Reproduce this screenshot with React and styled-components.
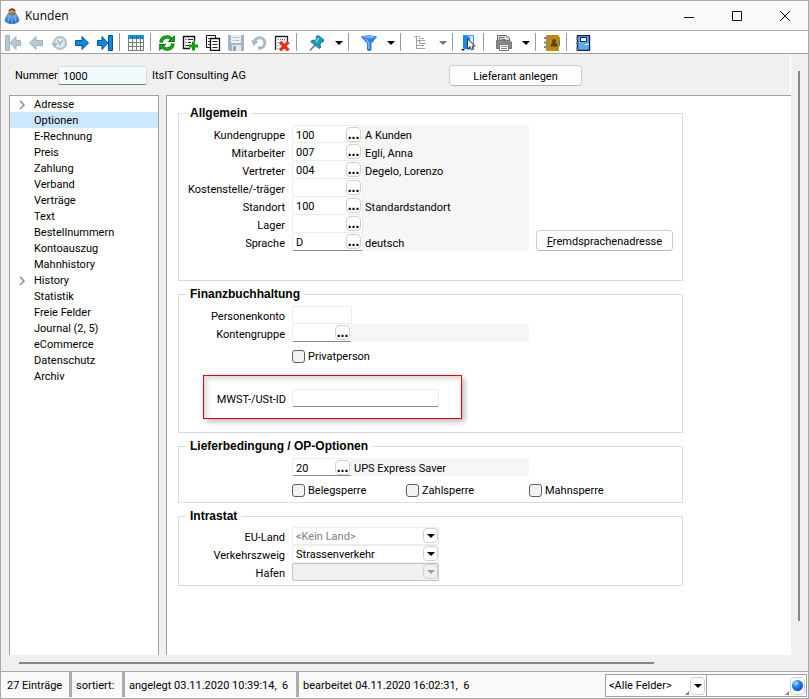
import React from "react";
import styled, { createGlobalStyle } from "styled-components";

const GlobalStyle = createGlobalStyle`
  *, *::before, *::after {
    box-sizing: border-box;
  }
  body {
    margin: 0;
    background: #f0f0f0;
    color: #000;
    font-family: Roboto, "Liberation Sans", sans-serif;
    font-size: 11px;
    line-height: 16px;
  }
  button, input, select {
    font: inherit;
    color: inherit;
    margin: 0;
    padding: 0;
  }
`;

/* ---------- icons ---------- */

const Svg = ({ children, size = 16, ...rest }) => (
  <svg
    width={size}
    height={size}
    viewBox="0 0 16 16"
    aria-hidden="true"
    {...rest}
  >
    {children}
  </svg>
);

const PersonIcon = () => (
  <Svg>
    <defs>
      <linearGradient id="coat" x1="0" y1="0" x2="0" y2="1">
        <stop offset="0" stopColor="#7fb9f0" />
        <stop offset="1" stopColor="#1766c4" />
      </linearGradient>
      <radialGradient id="head" cx="0.4" cy="0.3" r="0.8">
        <stop offset="0" stopColor="#d9bd85" />
        <stop offset="1" stopColor="#7d5316" />
      </radialGradient>
    </defs>
    <path
      d="M5 5C3 7 1.500 9 1 13C3 15 5 15.500 8 15.500s5-.5 7-2.500C14.500 9 13 7 11 5z"
      fill="url(#coat)"
      stroke="#1d5ca8"
      strokeWidth="0.6"
    />
    <path d="M5.500 8L4 14M8 9v6M10.500 8L12 14" stroke="#8ec6fa" strokeWidth="0.8" />
    <circle cx="8" cy="3.800" r="3.500" fill="url(#head)" />
    <path d="M4.500 3Q5 .4 8 .4t3.500 2.600Q8 1.500 4.500 3z" fill="#6d4a14" />
  </Svg>
);

const FirstIcon = () => (
  <Svg>
    <g fill="#b4c8d6" stroke="#9fb5c5">
      <path d="M.5.5h4v15h-4z" />
      <path d="M5 8l6-6.500v4h4.500v5H11v4z" />
    </g>
  </Svg>
);

const PrevIcon = () => (
  <Svg>
    <path
      d="M1.500 8L8 1.500v4h6.500v5H8v4z"
      fill="#b4c8d6"
      stroke="#9fb5c5"
    />
  </Svg>
);

const HistoryIcon = () => (
  <Svg>
    <circle cx="9" cy="8" r="6" fill="#e3eaef" stroke="#b5c6d2" strokeWidth="2.400" />
    <path d="M0 8h7L3.500 12.500z" fill="#a9bccb" />
    <path d="M6.500 5.500l2.500 3 3-3M9 8.500v2" fill="none" stroke="#9fb4c3" strokeWidth="1.500" />
  </Svg>
);

const NextIcon = () => (
  <Svg>
    <path d="M14.500 8L8 1.500v4H1.500v5H8v4z" fill="#0b8ae0" stroke="#0b4ea8" />
  </Svg>
);

const LastIcon = () => (
  <Svg>
    <g fill="#0b8ae0" stroke="#0b4ea8">
      <path d="M11.500.5h4v15h-4z" />
      <path d="M11 8L5 1.500v4H.5v5H5v4z" />
    </g>
  </Svg>
);

const TableIcon = () => (
  <Svg>
    <path d="M0 0h16v16H0z" fill="#7c7c7c" />
    <path d="M0 0h16v4H0z" fill="#1494cf" />
    <path d="M4.500 1v2M8.500 1v2M12.500 1v2" stroke="#0a5c8c" />
    <g fill="#fff">
      <path d="M1 4h3v3H1zM5 4h3v3H5zM9 4h3v3H9zM13 4h2v3h-2z" />
      <path d="M1 8h3v3H1zM5 8h3v3H5zM9 8h3v3H9zM13 8h2v3h-2z" />
      <path d="M1 12h3v3H1zM5 12h3v3H5zM9 12h3v3H9zM13 12h2v3h-2z" />
    </g>
  </Svg>
);

const RefreshIcon = () => (
  <Svg>
    <g fill="none" stroke="#067006" strokeWidth="3.400">
      <path d="M2 7.500A6 6 0 0 1 12 3.500" />
      <path d="M14 8.500A6 6 0 0 1 4 12.500" />
    </g>
    <path d="M15.800 0v7H8.500z" fill="#067006" />
    <path d="M.2 16V9h7.300z" fill="#067006" />
    <g fill="none" stroke="#14b014" strokeWidth="1.800">
      <path d="M2 7.500A6 6 0 0 1 12 3.500" />
      <path d="M14 8.500A6 6 0 0 1 4 12.500" />
    </g>
    <path d="M14.800 2.400v3.600h-3.800zM1.200 13.600V10H5z" fill="#14b014" />
  </Svg>
);

const AddIcon = () => (
  <Svg>
    <path d="M8 13.500H1.500v-12h11V6" fill="#fff" stroke="#111" strokeWidth="1.400" />
    <path d="M3.500 4.500h1M6 4.500h5M3.500 7.500h1M6 7.500h3M3.500 10.500h4" stroke="#222" />
    <path d="M11.500 6.500v9M7 11h9" stroke="#0aa00a" strokeWidth="3" />
  </Svg>
);

const CopyIcon = () => (
  <Svg>
    <path d="M1.500.5h9v12h-9z" fill="#fff" stroke="#111" />
    <path d="M3 3.500h6M3 6.500h3M3 9.500h3" stroke="#333" />
    <path d="M5.500 3.500h9v12h-9z" fill="#fff" stroke="#111" strokeWidth="1.300" />
    <path d="M7.500 6.500h5M7.500 9.500h5M7.500 12.500h5" stroke="#222" />
  </Svg>
);

const SaveIcon = () => (
  <Svg>
    <path d="M0 0h16v16H1.500L0 14.500z" fill="#a3b6c6" />
    <path d="M3 0h10v8H3z" fill="#eef2f5" />
    <path d="M4.500 2.500h7M4.500 5.500h7" stroke="#b9c7d2" />
    <path d="M4 10h9v6H4z" fill="#e2e9ee" />
    <path d="M5 11h3v5H5z" fill="#93a8ba" />
  </Svg>
);

const UndoIcon = () => (
  <Svg>
    <path
      d="M3.500 7A5.200 5.200 0 1 1 9 13.200"
      fill="none"
      stroke="#a9bac8"
      strokeWidth="3"
    />
    <path d="M0 5l7.500 1.500L2.500 11z" fill="#a9bac8" />
    <path d="M6.500 11.500h4L8 16z" fill="#a9bac8" />
  </Svg>
);

const DeleteIcon = () => (
  <Svg>
    <path d="M1.500 15V1.500h12V8" fill="none" stroke="#222" strokeWidth="1.300" />
    <path
      d="M3.500 4.500h1M6 4.500h5M3.500 7.500h1M3.500 10.500h1M3.500 13.500h2"
      stroke="#666"
      strokeDasharray="1 1"
    />
    <path d="M6 7l8.500 8.500M14.500 7L6 15.500" stroke="#f03210" strokeWidth="3.200" />
  </Svg>
);

const PinIcon = () => (
  <Svg>
    <path d="M6 10L1 15.500" stroke="#777" strokeWidth="1.600" />
    <path
      d="M7 1.500L9.500.6l5.500 4.400-1 2-1.500.2-1.500 2.300.8 3-1.500 1L1.800 6.800 3 5.200l3 .3L7.500 3.500z"
      fill="#1c9bc4"
      stroke="#115f80"
      strokeWidth="0.8"
    />
    <path d="M9.500 3l-2.500 4" stroke="#79d3ee" strokeWidth="1.500" />
  </Svg>
);

const FilterIcon = () => (
  <Svg>
    <path
      d="M.5 1.800Q8-.5 15.500 1.800L10 8.500v6.500Q8 16.300 6.500 15V8.500z"
      fill="#2f88e8"
      stroke="#1b5fbd"
      strokeWidth="0.800"
    />
    <ellipse cx="8" cy="2" rx="6" ry="1.200" fill="#6eb4fa" />
    <path d="M4.500 4l3.300 4.300V14" fill="none" stroke="#7fc0ff" strokeWidth="1.200" />
  </Svg>
);

const TreeIcon = () => (
  <Svg>
    <g fill="none" stroke="#a2a2a2">
      <path d="M1 1.500h6M3.500 2v11.500H7M3.500 5.500H7M6.500 5.500v3H9M3.500 10.500H7" />
      <path d="M6 3.500h5M7 5.500h5M9 8.500h4M7 10.500h4M7 13.500h5" />
    </g>
  </Svg>
);

const DoorIcon = () => (
  <Svg>
    <path d="M2.500.5h10v13h-10z" fill="#cfe8fc" stroke="#3c9de6" />
    <path d="M2 0l7 2v13l-7-2z" fill="#1389e8" />
    <path d="M0 14h4l-2 2z" fill="#000" />
    <path
      d="M6.500 4v10l2.500-2.300L10.500 15l1.800-.8L11 11h3.200z"
      fill="#f7f3e4"
      stroke="#2b2b2b"
      strokeWidth="0.900"
    />
  </Svg>
);

const PrinterIcon = () => (
  <Svg>
    <path d="M1.500 5V.5H10L13.500 3v3" fill="#ddd" stroke="#666" />
    <path d="M3.500 5.500v-3h5M5.500 5.500v-1h4" fill="none" stroke="#777" />
    <path d="M.5 5.500h13l2 1.500v6.500H.5z" fill="#8b8b8b" stroke="#777" />
    <path d="M11 7.500h1" stroke="#d22" />
    <path d="M13 7.500h1" stroke="#2b2" />
    <path d="M3.500 9.500h9v6h-9z" fill="#fff" stroke="#777" />
    <path d="M5 11.500h6M5 13.500h6" stroke="#888" />
  </Svg>
);

const AddressBookIcon = () => (
  <Svg>
    <path d="M14 2h2v3h-2z" fill="#f08020" />
    <path d="M14 5h2v3h-2z" fill="#2a2" />
    <path d="M14 8h2v3h-2z" fill="#28d" />
    <rect x="2" y="0" width="13" height="16" rx="1" fill="#bf8a0c" />
    <circle cx="10" cy="6" r="2" fill="#5d3e05" />
    <path d="M6.500 11.500q0-4 3.500-4t3.500 4z" fill="#5d3e05" />
    <path d="M0 3h5M0 7.500h5M0 12h5" stroke="#888" strokeWidth="1.800" />
  </Svg>
);

const NotebookIcon = () => (
  <Svg>
    <path d="M2.500.5h12v15h-12z" fill="#5cadf8" stroke="#06264d" strokeWidth="1.400" />
    <path d="M5.500 2.500h6v4h-6z" fill="#fff" stroke="#06264d" />
    <path d="M10 9.500h4" stroke="#fff" />
    <path d="M1 3.500h3M1 8.500h3M1 13.500h3" stroke="#777" strokeWidth="2" />
  </Svg>
);

const ArrowIcon = ({ color = "#000" }) => (
  <svg width="8" height="4" viewBox="0 0 8 4" aria-hidden="true">
    <path d="M0 0h8L4 4z" fill={color} />
  </svg>
);

const ChevronIcon = () => (
  <svg width="6" height="10" viewBox="0 0 6 10" aria-hidden="true">
    <path d="M1 1l4 4-4 4" fill="none" stroke="#8a8a8a" strokeWidth="1.500" />
  </svg>
);

const BallIcon = () => (
  <svg width="11" height="11" viewBox="0 0 11 11" aria-hidden="true">
    <defs>
      <radialGradient id="ball" cx="0.35" cy="0.3" r="0.8">
        <stop offset="0" stopColor="#bfe2ff" />
        <stop offset="0.4" stopColor="#1b86fa" />
        <stop offset="1" stopColor="#0546b8" />
      </radialGradient>
    </defs>
    <circle cx="5.500" cy="5.500" r="5.500" fill="url(#ball)" />
  </svg>
);

/* ---------- window frame ---------- */

const Window = styled.div`
  display: flex;
  flex-direction: column;
  min-height: 100vh;
  border: 1px solid #a9a9a9;
  background: #f0f0f0;
`;

const TitleBar = styled.header`
  display: flex;
  align-items: center;
  gap: 2px;
  height: 30px;
  padding-left: 3px;
  background: #f9f9f9;
  border-bottom: 1px solid #a9a9a9;

  h1 {
    flex: 1;
    margin: 0 0 0 3px;
    font-family: "Open Sans", "Noto Sans", sans-serif;
    font-size: 12px;
    font-weight: 400;
  }
`;

const WindowButton = styled.button`
  display: grid;
  place-items: center;
  width: 46px;
  height: 28px;
  border: 0;
  background: none;
`;

const Toolbar = styled.div`
  display: flex;
  align-items: center;
  height: 23px;
  background: #fff;
  border-bottom: 1px solid #a0a0a0;
`;

const ToolButton = styled.button`
  display: grid;
  place-items: center;
  flex: none;
  width: ${(props) => (props.$wide ? "32px" : "23px")};
  height: 22px;
  padding-top: 2px;
  border: 0;
  background: none;
`;

const ToolArrow = styled(ToolButton)`
  width: 12px;
`;

const Separator = styled.span`
  flex: none;
  width: 1px;
  height: 18px;
  margin: 0 4px 0 3px;
  background: #9a9a9a;
`;

const Workspace = styled.div`
  display: flex;
  flex: 1;
`;

const Main = styled.div`
  display: flex;
  flex: 1;
  flex-direction: column;
  min-width: 0;
`;

const VerticalScroll = styled.div`
  display: flex;
  flex: none;
  padding: 17px 8px 34px 7px;

  span {
    width: 2px;
    background: #868686;
  }
`;

const HorizontalScroll = styled.div`
  height: 16px;
  padding: 7px 154px 7px 18px;

  span {
    display: block;
    height: 2px;
    background: #868686;
  }
`;

const RecordHeader = styled.div`
  display: flex;
  align-items: center;
  height: 41px;
  padding: 2px 0 0 14px;
  border-right: 1px solid #fff;

  label {
    width: 43px;
  }
  output {
    width: 302px;
    padding-left: 5px;
  }
`;

const NumberInput = styled.input`
  width: 89px;
  height: 19px;
  padding: 1px 0 0 4px;
  border: 1px solid #dcdcdc;
  border-bottom-color: #7a7a7a;
  border-radius: 2px;
  background: #f0faff;
`;

const PushButton = styled.button`
  flex: none;
  width: ${(props) => props.$width};
  height: 21px;
  padding-top: 2px;
  border: 1px solid #cdcdcd;
  border-bottom-color: #b8b8b8;
  border-radius: 4px;
  background: #fdfdfd;
`;

const Panels = styled.div`
  display: flex;
  flex: 1;
  gap: 7px;
  padding-left: 8px;
`;

/* ---------- navigation ---------- */

const Sidebar = styled.nav`
  flex: none;
  width: 150px;
  border: 1px solid #a0a0a0;
  border-bottom: 0;
  background: #fff;
`;

const NavItem = styled.button`
  display: flex;
  align-items: center;
  width: 100%;
  height: 16px;
  padding: 1px 0 0 9px;
  border: 0;
  border-radius: 2px;
  text-align: left;
  background: ${(props) => (props.$selected ? "#cce8ff" : "none")};

  .expander {
    display: flex;
    width: 15px;
  }
`;

/* ---------- form ---------- */

const Form = styled.form`
  display: flex;
  flex: 1;
  flex-direction: column;
  gap: 6px;
  min-width: 0;
  padding: 10px 11px;
  border: solid #a0a0a0;
  border-width: 1px 0 0 1px;
  background: #fff;
`;

const Group = styled.fieldset`
  width: 100%;
  max-width: 505px;
  min-width: 0;
  margin: 0;
  padding: ${(props) => props.$padding || "4px 0"};
  border: 1px solid #dcdcdc;

  legend {
    margin-left: 7px;
    padding: 0 4px;
    font-family: "Liberation Sans", sans-serif;
    font-size: 12px;
    font-weight: 700;
    line-height: 15px;
  }
`;

const GroupBody = styled.div`
  display: flex;
  align-items: flex-end;
  gap: 7px;
`;

const Rows = styled.div`
  flex: 0 1 350px;
  min-width: 0;
`;

const Field = styled.div`
  display: flex;
  align-items: center;
  width: ${(props) => props.$width};
  margin-left: 6px;
  padding-right: 1px;
  border: 1px solid #ececec;
  border-top: 0;
  border-bottom-color: ${(props) => (props.$last ? "#8a8a8a" : "#ececec")};
  border-radius: 2px;
  background: #fff;

  input {
    flex: 1;
    min-width: 0;
    height: 17px;
    padding: 2px 0 0 3px;
    border: 0;
    background: none;
    outline: none;
  }
`;

const Row = styled.div`
  display: grid;
  grid-template-columns: 107px auto minmax(0, 1fr);
  grid-template-rows: 18px;
  align-items: stretch;

  label {
    padding-right: 1px;
    line-height: 21px;
    text-align: right;
  }
  &:first-child ${Field} {
    border-top: 1px solid #ececec;
  }
`;

const LookupButton = styled.button`
  display: flex;
  flex: none;
  justify-content: center;
  width: 15px;
  height: 15px;
  border: 1px solid #cfcfcf;
  border-radius: 4px;
  background: #fff;
  font-family: "Liberation Sans", sans-serif;
  font-size: 14px;
  font-weight: 700;
  line-height: 13px;
`;

const Readout = styled.output`
  padding-left: 2px;
  line-height: 21px;
  background: #f6f6f6;
`;

const CheckLabel = styled.label`
  display: flex;
  align-items: center;
  gap: 3px;
  height: 14px;
  line-height: 14px;

  input {
    flex: none;
    appearance: none;
    width: 13px;
    height: 13px;
    border: 1px solid #5f5f5f;
    border-radius: 3px;
    background: #f3f3f3;
  }
  span {
    padding-top: 1px;
  }
`;

const CheckRow = styled.div`
  display: grid;
  grid-template-columns: 114px 123px auto;
  margin-top: 7px;
  padding-left: 113px;
`;

const Highlight = styled.div`
  width: 259px;
  margin: 12px 0 0 24px;
  padding: 13px 0 11px;
  border: 1px solid #f00000;
  box-shadow: 3px 3px 5px rgba(0, 0, 0, 0.25),
    inset 3px 3px 5px rgba(0, 0, 0, 0.15);

  ${Row} {
    grid-template-columns: 83px auto;
  }
  ${Field} {
    margin-left: 5px;
  }
`;

const Picker = styled.div`
  position: relative;
  width: 147px;
  height: 18px;
  margin-left: 6px;

  select {
    appearance: none;
    width: 100%;
    height: 100%;
    padding: 1px 0 0 3px;
    border: 1px solid ${(props) => (props.$disabled ? "#c4c4c4" : "#ececec")};
    border-radius: 2px;
    background: ${(props) => (props.$disabled ? "#f0f0f0" : "#fff")};
    color: ${(props) => (props.$muted ? "#808080" : "#000")};
    opacity: 1;
  }
`;

const PickerArrow = styled.span`
  position: absolute;
  top: 1px;
  right: 1px;
  display: grid;
  place-items: center;
  width: 15px;
  height: 15px;
  padding-top: 1px;
  border: 1px solid #d0d0d0;
  border-radius: 4px;
  background: ${(props) => (props.$disabled ? "#f0f0f0" : "#fff")};
  pointer-events: none;
`;

/* ---------- status bar ---------- */

const StatusBar = styled.footer`
  display: flex;
  height: 27px;
  padding-right: 1px;
  border-top: 1px solid #a9a9a9;
  background: #f9f9f9;
`;

const StatusCell = styled.span`
  flex: ${(props) => (props.$width ? `0 0 ${props.$width}` : "1")};
  height: 25px;
  padding-left: ${(props) => (props.$first ? "6px" : "4px")};
  border-right: ${(props) => (props.$width ? "3px solid #adadad" : "0")};
  line-height: 27px;
  white-space: pre;
`;

const StatusField = styled.div`
  position: relative;
  display: flex;
  width: 101px;
  height: 23px;
  margin-top: 2px;
  border: 1px solid #a0a0a0;
  border-right-width: ${(props) => (props.$joined ? "0" : "1px")};
  background: #fff;

  select,
  input {
    appearance: none;
    flex: 1;
    min-width: 0;
    padding-left: 3px;
    border: 0;
    background: none;
    outline: none;
  }
  &::after {
    content: "";
    position: absolute;
    right: 17px;
    bottom: 1px;
    border: 2px solid #808080;
    border-top-color: transparent;
    border-left-color: transparent;
  }
`;

const StatusButton = styled.button`
  display: grid;
  place-items: center;
  align-self: center;
  width: 15px;
  height: 18px;
  margin-right: 1px;
  border: 1px solid #d0d0d0;
  border-radius: 4px;
  background: #fff;
`;

/* ---------- data ---------- */

const toolGroups = [
  [
    ["Erster", FirstIcon],
    ["Zurück", PrevIcon],
    ["Verlauf", HistoryIcon],
    ["Weiter", NextIcon],
    ["Letzter", LastIcon],
  ],
  [["Tabelle", TableIcon]],
  [
    ["Aktualisieren", RefreshIcon],
    ["Neu", AddIcon],
    ["Kopieren", CopyIcon],
    ["Speichern", SaveIcon],
    ["Rückgängig", UndoIcon],
    ["Löschen", DeleteIcon],
  ],
  [["Anheften", PinIcon, "#000"]],
  [["Filter", FilterIcon, "#000"]],
  [["Struktur", TreeIcon, "#777"]],
  [["Auswahl", DoorIcon]],
  [["Drucken", PrinterIcon, "#000"]],
  [["Adressbuch", AddressBookIcon]],
  [["Notizbuch", NotebookIcon]],
];

const navItems = [
  { label: "Adresse", expandable: true },
  { label: "Optionen", selected: true },
  { label: "E-Rechnung" },
  { label: "Preis" },
  { label: "Zahlung" },
  { label: "Verband" },
  { label: "Verträge" },
  { label: "Text" },
  { label: "Bestellnummern" },
  { label: "Kontoauszug" },
  { label: "Mahnhistory" },
  { label: "History", expandable: true },
  { label: "Statistik" },
  { label: "Freie Felder" },
  { label: "Journal (2, 5)" },
  { label: "eCommerce" },
  { label: "Datenschutz" },
  { label: "Archiv" },
];

const generalFields = [
  { id: "kundengruppe", label: "Kundengruppe", value: "100", text: "A Kunden" },
  { id: "mitarbeiter", label: "Mitarbeiter", value: "007", text: "Egli, Anna" },
  { id: "vertreter", label: "Vertreter", value: "004", text: "Degelo, Lorenzo" },
  { id: "kostenstelle", label: "Kostenstelle/-träger", value: "", text: "" },
  { id: "standort", label: "Standort", value: "100", text: "Standardstandort" },
  { id: "lager", label: "Lager", value: "", text: "" },
  { id: "sprache", label: "Sprache", value: "D", text: "deutsch" },
];

/* ---------- components ---------- */

const LookupRow = ({ id, label, value, text, width = "71px", last }) => (
  <Row>
    <label htmlFor={id}>{label}</label>
    <Field $width={width} $last={last}>
      <input
        id={id}
        defaultValue={value}
        aria-label={label ? undefined : "Lieferbedingung"}
      />
      <LookupButton type="button">...</LookupButton>
    </Field>
    <Readout htmlFor={id}>{text}</Readout>
  </Row>
);

const SelectRow = ({ id, label, value, muted, disabled }) => (
  <Row>
    <label htmlFor={id}>{label}</label>
    <Picker $muted={muted} $disabled={disabled}>
      <select id={id} disabled={disabled}>
        <option>{value}</option>
      </select>
      <PickerArrow $disabled={disabled}>
        <ArrowIcon color={disabled ? "#a0a0a0" : "#000"} />
      </PickerArrow>
    </Picker>
  </Row>
);

const Check = ({ label }) => (
  <CheckLabel>
    <input type="checkbox" />
    <span>{label}</span>
  </CheckLabel>
);

const App = () => {
  return (
    <>
      <GlobalStyle />
      <Window>
        <TitleBar>
          <PersonIcon />
          <h1>Kunden</h1>
          <WindowButton aria-label="Minimieren">
            <svg width="10" height="10" viewBox="0 0 10 10">
              <path d="M0 6.500h10" stroke="#111" />
            </svg>
          </WindowButton>
          <WindowButton aria-label="Maximieren">
            <svg width="10" height="10" viewBox="0 0 10 10">
              <path d="M.5.500h9v9h-9z" fill="none" stroke="#111" />
            </svg>
          </WindowButton>
          <WindowButton aria-label="Schliessen">
            <svg width="10" height="10" viewBox="0 0 10 10">
              <path d="M0 0l10 10M10 0L0 10" stroke="#111" />
            </svg>
          </WindowButton>
        </TitleBar>

        <Toolbar role="toolbar">
          {toolGroups.map((group, index) => (
            <React.Fragment key={index}>
              {index > 0 && <Separator />}
              {group.map(([label, Icon, arrow]) => (
                <React.Fragment key={label}>
                  <ToolButton aria-label={label} $wide={Boolean(arrow)}>
                    <Icon />
                  </ToolButton>
                  {arrow && (
                    <ToolArrow aria-label={`${label} Menü`}>
                      <ArrowIcon color={arrow} />
                    </ToolArrow>
                  )}
                </React.Fragment>
              ))}
            </React.Fragment>
          ))}
        </Toolbar>

        <Workspace>
          <Main>
            <RecordHeader>
              <label htmlFor="nummer">Nummer</label>
              <NumberInput id="nummer" defaultValue="1000" />
              <output htmlFor="nummer">ItsIT Consulting AG</output>
              <PushButton $width="133px">Lieferant anlegen</PushButton>
            </RecordHeader>

            <Panels>
              <Sidebar>
                {navItems.map((item) => (
                  <NavItem key={item.label} $selected={item.selected}>
                    <span className="expander">
                      {item.expandable && <ChevronIcon />}
                    </span>
                    {item.label}
                  </NavItem>
                ))}
              </Sidebar>

              <Form>
                <Group $padding="4px 0 29px">
                  <legend>Allgemein</legend>
                  <GroupBody>
                    <Rows>
                      {generalFields.map((field, index) => (
                        <LookupRow
                          key={field.id}
                          {...field}
                          last={index === generalFields.length - 1}
                        />
                      ))}
                    </Rows>
                    <PushButton type="button" $width="137px">
                      <u>F</u>remdsprachenadresse
                    </PushButton>
                  </GroupBody>
                </Group>

                <Group $padding="4px 0 13px">
                  <legend>Finanzbuchhaltung</legend>
                  <GroupBody>
                    <Rows>
                      <Row>
                        <label htmlFor="personenkonto">Personenkonto</label>
                        <Field $width="60px">
                          <input id="personenkonto" />
                        </Field>
                      </Row>
                      <LookupRow
                        id="kontengruppe"
                        label="Kontengruppe"
                        value=""
                        text=""
                        width="60px"
                        last
                      />
                    </Rows>
                  </GroupBody>
                  <CheckRow>
                    <Check label="Privatperson" />
                  </CheckRow>
                  <Highlight>
                    <Row>
                      <label htmlFor="mwst">MWST-/USt-ID</label>
                      <Field $width="147px" $last>
                        <input id="mwst" />
                      </Field>
                    </Row>
                  </Highlight>
                </Group>

                <Group $padding="4px 0 5px">
                  <legend>Lieferbedingung / OP-Optionen</legend>
                  <GroupBody>
                    <Rows>
                      <LookupRow
                        id="lieferbedingung"
                        label=""
                        value="20"
                        text="UPS Express Saver"
                        width="60px"
                        last
                      />
                    </Rows>
                  </GroupBody>
                  <CheckRow>
                    <Check label="Belegsperre" />
                    <Check label="Zahlsperre" />
                    <Check label="Mahnsperre" />
                  </CheckRow>
                </Group>

                <Group $padding="3px 0 4px">
                  <legend>Intrastat</legend>
                  <SelectRow
                    id="eu-land"
                    label="EU-Land"
                    value="<Kein Land>"
                    muted
                  />
                  <SelectRow
                    id="verkehrszweig"
                    label="Verkehrszweig"
                    value="Strassenverkehr"
                  />
                  <SelectRow id="hafen" label="Hafen" value="" disabled />
                </Group>
              </Form>
            </Panels>
          </Main>
          <VerticalScroll>
            <span />
          </VerticalScroll>
        </Workspace>

        <HorizontalScroll>
          <span />
        </HorizontalScroll>

        <StatusBar>
          <StatusCell $width="71px" $first>
            27 Einträge
          </StatusCell>
          <StatusCell $width="53px">sortiert:</StatusCell>
          <StatusCell $width="174px">
            {"angelegt 03.11.2020 10:39:14,  6"}
          </StatusCell>
          <StatusCell>{"bearbeitet 04.11.2020 16:02:31,  6"}</StatusCell>
          <StatusField $joined>
            <select aria-label="Suchfeld">
              <option>{"<Alle Felder>"}</option>
            </select>
            <StatusButton as="span">
              <ArrowIcon />
            </StatusButton>
          </StatusField>
          <StatusField>
            <input aria-label="Suche" />
            <StatusButton aria-label="Suchen">
              <BallIcon />
            </StatusButton>
          </StatusField>
        </StatusBar>
      </Window>
    </>
  );
};

export default App;
